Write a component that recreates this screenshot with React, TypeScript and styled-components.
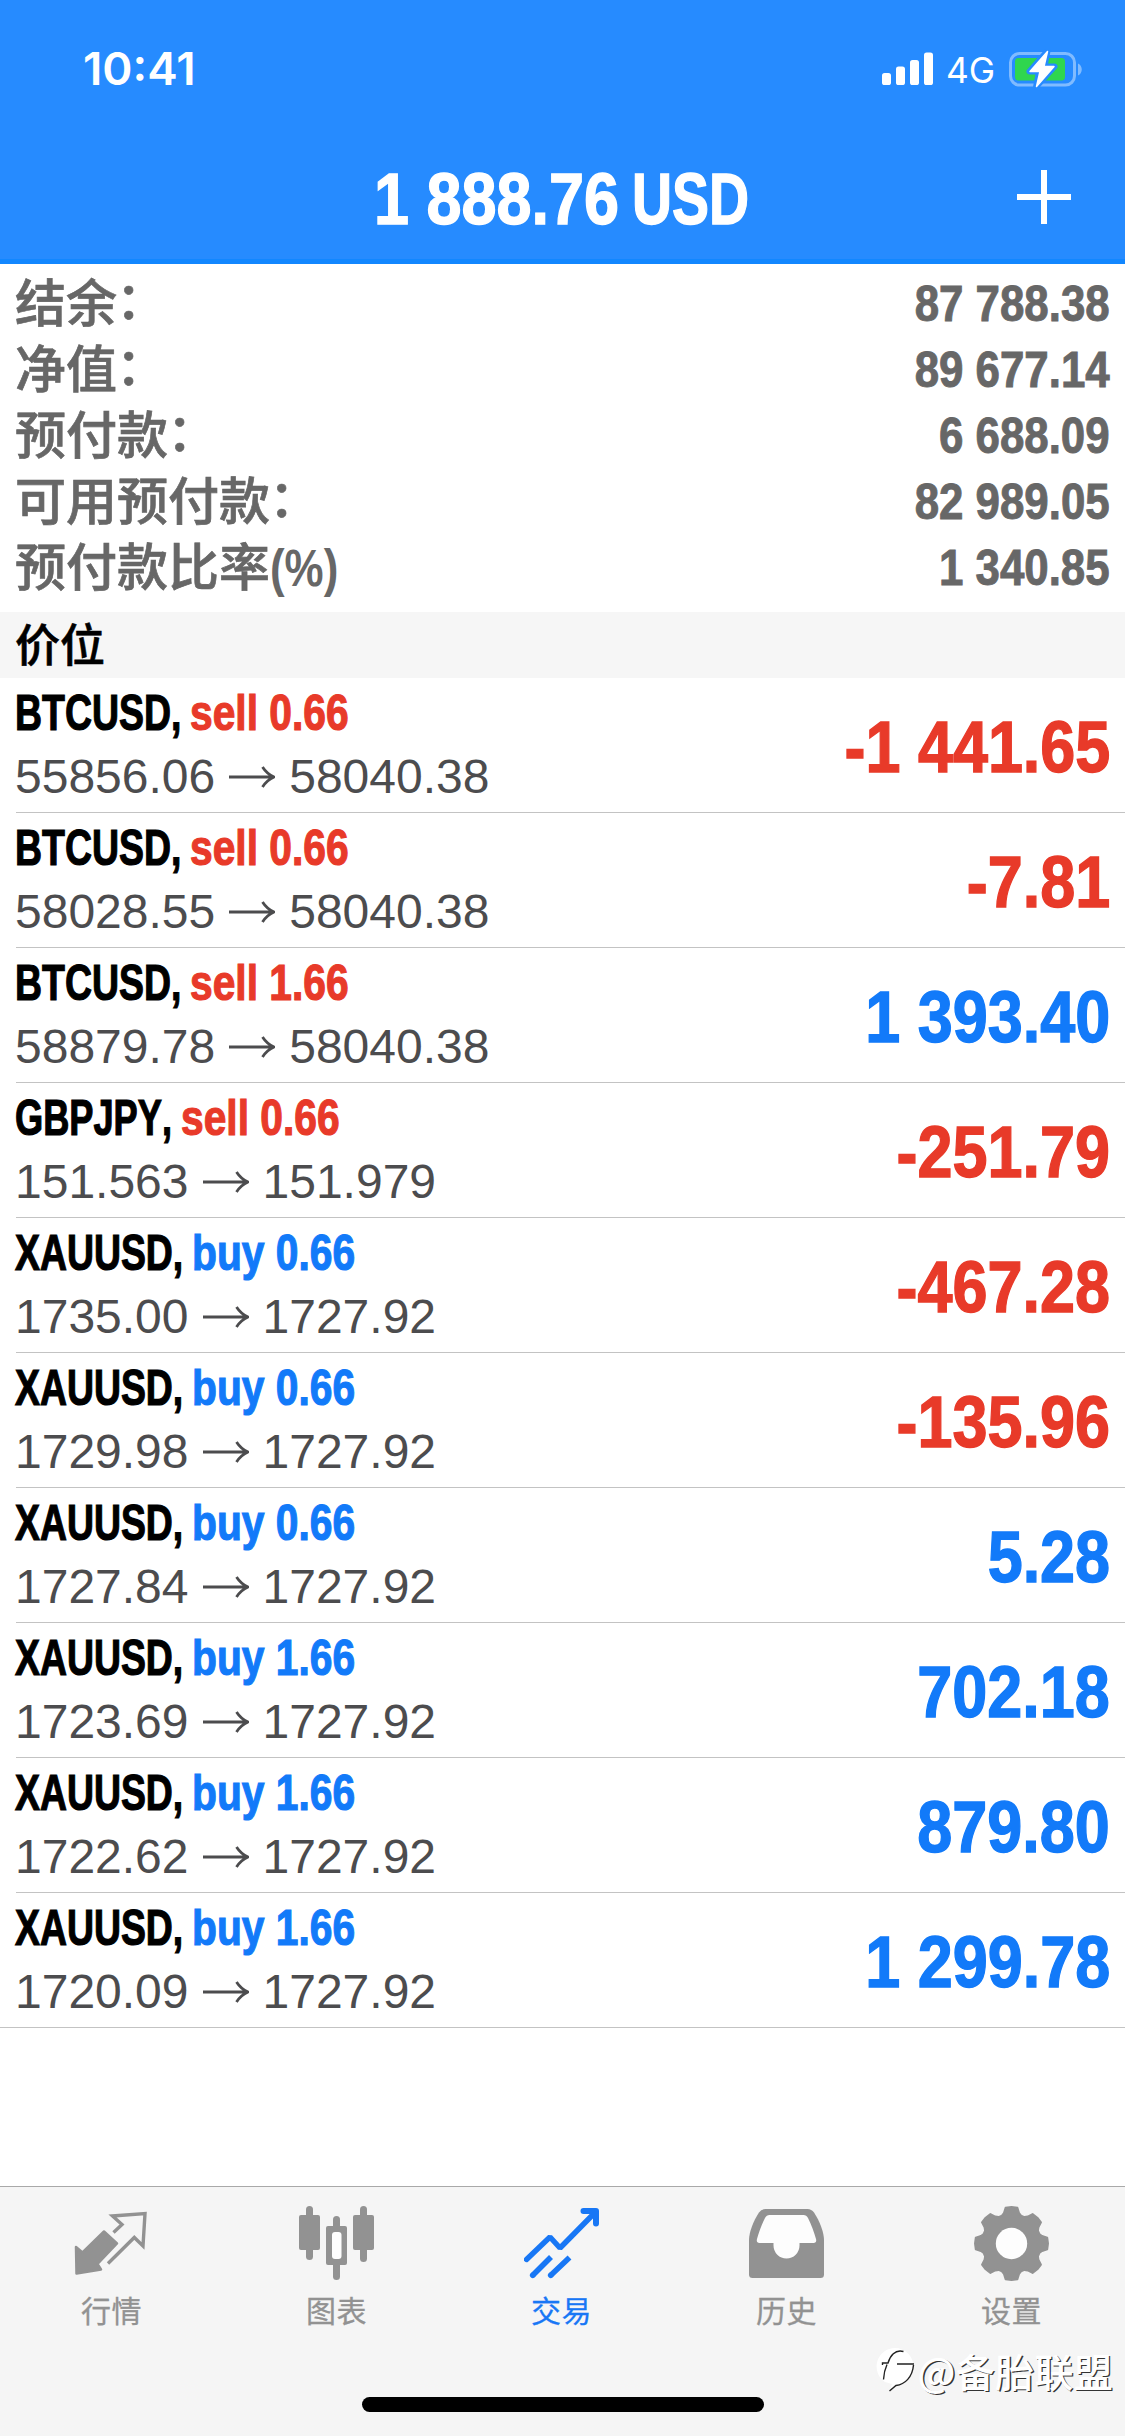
import React, { useLayoutEffect, useRef, useState } from "react";
import styled, { createGlobalStyle } from "styled-components";

const LATIN = '"Liberation Sans", Arial, sans-serif';
const CJK = '"Liberation Sans", "Noto Sans CJK SC", sans-serif';
const RED = "#e83a29";
const BLUE = "#127af9";

const GlobalStyle = createGlobalStyle`
  * { box-sizing: border-box; }
  body { margin: 0; background: #fff; }
`;

const Screen = styled.div`
  position: relative;
  display: flex;
  flex-direction: column;
  width: 1125px;
  height: 2436px;
  overflow: hidden;
  background: #fff;
  font-family: ${LATIN};
  font-kerning: none;
`;

/* Text squeezed horizontally to a given advance width. */
const FitBox = styled.span<{ $w: number }>`
  display: block;
  flex: none;
  width: ${(p) => p.$w}px;
  white-space: pre;
`;
const FitInner = styled.span`
  display: inline-block;
  transform-origin: 0 50%;
`;
function Fit({ width, children }: { width: number; children: React.ReactNode }) {
  const ref = useRef<HTMLSpanElement>(null);
  const [scale, setScale] = useState(1);
  useLayoutEffect(() => {
    const el = ref.current;
    if (el && el.offsetWidth) setScale(width / el.offsetWidth);
  }, [width, children]);
  return (
    <FitBox $w={width}>
      <FitInner ref={ref} style={{ transform: `scaleX(${scale})` }}>
        {children}
      </FitInner>
    </FitBox>
  );
}

const Header = styled.header`
  flex: none;
  height: 264px;
  background: #268bff;
  border-bottom: 5px solid #1287ff;
  color: #fff;
`;
const StatusBar = styled.div`
  display: flex;
  align-items: center;
  justify-content: space-between;
  height: 132px;
  padding: 6px 41px 0 83px;
`;
const Clock = styled.div`
  font: 600 45px/54px Inter, sans-serif;
`;
const StatusIcons = styled.div`
  display: flex;
  align-items: center;
`;
const Network = styled.div`
  margin: 0 14px 0 13px;
  padding-top: 1px;
  font: 400 36px/40px Inter, sans-serif;
`;
const NavBar = styled.div`
  display: grid;
  grid-template-columns: 1fr auto 1fr;
  align-items: center;
  height: 132px;
  padding: 2px 54px 0;
`;
const Title = styled.h1`
  grid-column: 2;
  display: flex;
  gap: 13px;
  margin: 0 2px 0 0;
  font-size: 73px;
  font-weight: 700;
  line-height: 80px;
  -webkit-text-stroke: 1.4px currentColor;
`;
const AddIcon = styled.svg`
  justify-self: end;
  margin-top: -4px;
`;

const Summary = styled.section`
  flex: none;
  height: 348px;
  padding: 7px 15px 0 15px;
  color: #676767;
`;
const SummaryRow = styled.div`
  display: flex;
  justify-content: space-between;
  height: 66px;
`;
const Label = styled.span`
  display: flex;
  padding-top: 1px;
  font: 500 51px/66px ${CJK};
  -webkit-text-stroke: 0.7px currentColor;
`;
const Colon = styled.span`
  margin: -3px 0 0 -1px;
`;
const Suffix = styled.span`
  font-weight: 700;
  -webkit-text-stroke: 0;
`;
const Amount = styled.span<{ $size: number; $color?: string }>`
  font-size: ${(p) => p.$size}px;
  font-weight: 700;
  line-height: 66px;
  color: ${(p) => p.$color ?? "inherit"};
  white-space: pre;
  transform: scaleX(0.868);
  transform-origin: 100% 50%;
  -webkit-text-stroke: ${(p) => p.$size * 0.019}px currentColor;
`;

const SectionTitle = styled.h2`
  flex: none;
  height: 66px;
  margin: 0;
  padding: 1px 15px 0;
  background: #f6f6f6;
  color: #000;
  font: 500 45px/67px ${CJK};
  -webkit-text-stroke: 0.6px currentColor;
`;

const List = styled.ul`
  flex: 1;
  margin: 0;
  padding: 0;
  list-style: none;
`;
const Item = styled.li`
  display: flex;
  justify-content: space-between;
  align-items: center;
  height: 135px;
  margin-left: 16px;
  padding-right: 15px;
  border-bottom: 1px solid #c3c3c3;
  &:last-child {
    margin-left: 0;
    padding-left: 16px;
  }
`;
const Profit = styled.div`
  display: flex;
  padding-top: 3px;
`;
const Details = styled.div`
  display: flex;
  flex-direction: column;
  margin-left: -1px;
`;
const Deal = styled.div<{ $buy: boolean }>`
  display: flex;
  gap: 9px;
  font-size: 50.5px;
  font-weight: 700;
  line-height: 64px;
  color: ${(p) => (p.$buy ? BLUE : RED)};
  -webkit-text-stroke: 1.2px currentColor;
`;
const Symbol = styled.div`
  color: #000;
`;
const Prices = styled.div`
  display: flex;
  align-items: center;
  gap: 14px;
  font-size: 48px;
  line-height: 64px;
  color: #4c4c4e;
`;

const TabBar = styled.nav`
  display: flex;
  flex: none;
  height: 250px;
  padding-top: 19px;
  border-top: 1px solid #a9a9a9;
  background: #f5f5f5;
`;
const Tab = styled.div<{ $active: boolean }>`
  display: flex;
  flex: 1;
  flex-direction: column;
  align-items: center;
  gap: 11px;
  padding-right: 2px;
  color: ${(p) => (p.$active ? "#1877f5" : "#929292")};
  font: 400 30px/40px ${CJK};
  letter-spacing: 0.5px;
  -webkit-text-stroke: 0.3px currentColor;
`;
const HomeIndicator = styled.div`
  position: absolute;
  left: 362px;
  bottom: 24px;
  width: 402px;
  height: 15px;
  border-radius: 8px;
  background: #000;
`;
const Watermark = styled.div`
  position: absolute;
  right: 12px;
  bottom: 36px;
  display: flex;
  align-items: center;
  gap: 2px;
  padding-bottom: 3px;
  color: #fff;
  font: 500 39px/54px "Noto Sans CJK SC", sans-serif;
  letter-spacing: 0.3px;
  text-shadow: 1.3px 1.3px 0 #333;
`;

const Signal = () => (
  <svg width="51" height="36" viewBox="0 0 51 36" fill="#fff">
    <rect x="0" y="22" width="9" height="12" rx="2.6" />
    <rect x="14" y="15.5" width="9" height="18.5" rx="2.6" />
    <rect x="28" y="9" width="9" height="25" rx="2.6" />
    <rect x="42" y="1.5" width="9" height="32.5" rx="2.6" />
  </svg>
);
const Battery = () => (
  <svg width="75" height="40" viewBox="0 0 75 40">
    <rect x="1.5" y="4.5" width="64" height="31.5" rx="9" fill="none" stroke="#80bbff" strokeWidth="3" />
    <path d="M69 14.5c5 2 5 10 0 12z" fill="#80bbff" />
    <rect x="6" y="9" width="50" height="22.5" rx="3.5" fill="#2fd64e" />
    <path
      d="M38.500 2 20.500 22.500h9.500l-3 15.500 18.500-20.500H35.500z"
      fill="#268bff"
      stroke="#268bff"
      strokeWidth="6"
      strokeLinejoin="round"
    />
    <path
      d="M38.500 2.500 21 22.500h10l-3.500 15 17.500-20H35z"
      fill="#fff"
      stroke="#fff"
      strokeWidth="1.500"
      strokeLinejoin="round"
    />
  </svg>
);
const Arrow = () => (
  <svg width="46" height="22" viewBox="0 0 46 22" fill="none" stroke="currentColor" strokeWidth="2.8">
    <path d="M0 11H44M33.500 1Q38 8 45 11Q38 14 33.500 21" />
  </svg>
);

const QuotesIcon = () => (
  <svg width="75" height="75" viewBox="0 0 75 75">
    <path
      d="M2 41 8.500 46.500 30 25.500 43 37.500 23.500 58 27 63.500 2.500 67.500z"
      fill="currentColor"
      stroke="currentColor"
      strokeWidth="2.500"
      strokeLinejoin="round"
    />
    <path
      d="M39.500 26.500 48 18.500 38.500 10 71 7.500 69 40 60.300 31.500 34 57.500"
      fill="none"
      stroke="currentColor"
      strokeWidth="3.400"
    />
  </svg>
);
const ChartIcon = () => (
  <svg width="75" height="75" viewBox="0 0 75 75" fill="currentColor">
    <rect x="7" y="0" width="7" height="54" rx="3.500" />
    <rect x="0" y="9" width="21" height="35" rx="2" />
    <rect x="34" y="10" width="7" height="64" rx="3.500" />
    <rect x="27" y="20" width="21" height="39" rx="2" />
    <rect x="33" y="26" width="9.500" height="27" rx="3" fill="#fdfdfd" />
    <rect x="61" y="0" width="7" height="56" rx="3.500" />
    <rect x="54" y="9" width="21" height="35" rx="2" />
  </svg>
);
const TradeIcon = () => (
  <svg width="75" height="75" viewBox="0 0 75 75" fill="none" stroke="currentColor" strokeLinecap="round">
    <path d="M2.500 53.500 26 31 36 42 71 6.500" strokeWidth="5.400" strokeLinejoin="bevel" />
    <path d="M59.500 5H72V17.500" strokeWidth="6" strokeLinejoin="round" />
    <path d="M8.500 69.500 27 51M26.500 69.500 45.500 51.500" strokeWidth="5.600" strokeLinecap="butt" />
    <path d="M8.700 69.300l.1-.1M26.700 69.300l.1-.1" strokeWidth="5.600" />
  </svg>
);
const HistoryIcon = () => (
  <svg width="75" height="75" viewBox="0 0 75 75">
    <path
      fill="currentColor"
      d="M10 6.500Q12.500 3 16.500 3H58.500Q62.500 3 65 6.500C71 15.500 75 27 75 34V68.500Q75 72 71.500 72H3.500Q0 72 0 68.500V34C0 27 4 15.500 10 6.500Z"
    />
    <path
      fill="#fdfdfd"
      d="M20.500 9H54.500Q57.500 9 59 12C62.500 19 65 26 67 33Q68 37 64.500 37H50.500V39.500A13 13 0 0 1 24.500 39.500V37H10.500Q7 37 8 33C10 26 12.500 19 16 12Q17.500 9 20.500 9Z"
    />
  </svg>
);
const gearPoints = Array.from({ length: 8 })
  .flatMap((_, i) =>
    [
      [-19, 29.5],
      [-14, 31.5],
      [-9.5, 36.3],
      [0, 36.6],
      [9.5, 36.3],
      [14, 31.5],
      [19, 29.5],
    ].map(([a, r]) => {
      const t = ((i * 45 + a) * Math.PI) / 180;
      return `${(37.5 + r * Math.sin(t)).toFixed(2)},${(37.5 - r * Math.cos(t)).toFixed(2)}`;
    }),
  )
  .join(" ");
const SettingsIcon = () => (
  <svg width="75" height="75" viewBox="0 0 75 75">
    <polygon points={gearPoints} fill="currentColor" stroke="currentColor" strokeWidth="1.800" strokeLinejoin="round" />
    <circle cx="37.500" cy="37.500" r="15.700" fill="#fdfdfd" />
  </svg>
);
const WatermarkLogo = () => (
  <svg width="40" height="46" viewBox="0 0 40 46">
    <path d="M19 1a18.500 18.500 0 0 0-10 34L16 37 14 43l5-4.500C30 38 37.500 30 37.500 19.500A18.500 18.500 0 0 0 19 1z" fill="#fff" />
    <path
      d="M27.500 4.500C19 2 14 9 12 16H6.500V18M11 17.500Q8 24 7.500 32.500M21 17H38M37.500 18C36.500 30 29 37.500 20 38.500L13.500 44"
      fill="none"
      stroke="#222"
      strokeWidth="1.400"
    />
  </svg>
);

const summary = [
  { label: "结余", value: "87 788.38" },
  { label: "净值", value: "89 677.14" },
  { label: "预付款", value: "6 688.09" },
  { label: "可用预付款", value: "82 989.05" },
  { label: "预付款比率", suffix: "(%)", value: "1 340.85" },
];

const symbolWidth: Record<string, number> = { BTCUSD: 166, GBPJPY: 157, XAUUSD: 168 };

const positions = [
  { symbol: "BTCUSD", side: "sell", volume: "0.66", open: "55856.06", now: "58040.38", profit: "-1 441.65" },
  { symbol: "BTCUSD", side: "sell", volume: "0.66", open: "58028.55", now: "58040.38", profit: "-7.81" },
  { symbol: "BTCUSD", side: "sell", volume: "1.66", open: "58879.78", now: "58040.38", profit: "1 393.40" },
  { symbol: "GBPJPY", side: "sell", volume: "0.66", open: "151.563", now: "151.979", profit: "-251.79" },
  { symbol: "XAUUSD", side: "buy", volume: "0.66", open: "1735.00", now: "1727.92", profit: "-467.28" },
  { symbol: "XAUUSD", side: "buy", volume: "0.66", open: "1729.98", now: "1727.92", profit: "-135.96" },
  { symbol: "XAUUSD", side: "buy", volume: "0.66", open: "1727.84", now: "1727.92", profit: "5.28" },
  { symbol: "XAUUSD", side: "buy", volume: "1.66", open: "1723.69", now: "1727.92", profit: "702.18" },
  { symbol: "XAUUSD", side: "buy", volume: "1.66", open: "1722.62", now: "1727.92", profit: "879.80" },
  { symbol: "XAUUSD", side: "buy", volume: "1.66", open: "1720.09", now: "1727.92", profit: "1 299.78" },
];

const tabs = [
  { name: "行情", Icon: QuotesIcon },
  { name: "图表", Icon: ChartIcon },
  { name: "交易", Icon: TradeIcon, active: true },
  { name: "历史", Icon: HistoryIcon },
  { name: "设置", Icon: SettingsIcon },
];

export default function App() {
  return (
    <>
      <GlobalStyle />
      <Screen>
        <Header>
          <StatusBar>
            <Clock>
              <Fit width={113}>10:41</Fit>
            </Clock>
            <StatusIcons>
              <Signal />
              <Network>
                <Fit width={49}>4G</Fit>
              </Network>
              <Battery />
            </StatusIcons>
          </StatusBar>
          <NavBar>
            <Title>
              <Fit width={245}>1 888.76</Fit>
              <Fit width={117}>USD</Fit>
            </Title>
            <AddIcon width="54" height="54" viewBox="0 0 54 54" stroke="#fff" strokeWidth="6">
              <path d="M0 27H54M27 0V54" />
            </AddIcon>
          </NavBar>
        </Header>

        <Summary>
          {summary.map((row) => (
            <SummaryRow key={row.label}>
              <Label>
                {row.label}
                {row.suffix ? (
                  <Suffix>
                    <Fit width={68}>{row.suffix}</Fit>
                  </Suffix>
                ) : (
                  <Colon>：</Colon>
                )}
              </Label>
              <Amount $size={50.5}>{row.value}</Amount>
            </SummaryRow>
          ))}
        </Summary>

        <SectionTitle>价位</SectionTitle>

        <List>
          {positions.map((p, i) => (
            <Item key={i}>
              <Details>
                <Deal $buy={p.side === "buy"}>
                  <Symbol>
                    <Fit width={symbolWidth[p.symbol]}>{p.symbol + ","}</Fit>
                  </Symbol>
                  <Fit width={p.side === "buy" ? 163 : 159}>{`${p.side} ${p.volume}`}</Fit>
                </Deal>
                <Prices>
                  {p.open}
                  <Arrow />
                  {p.now}
                </Prices>
              </Details>
              <Profit>
                <Amount $size={72.5} $color={p.profit.startsWith("-") ? RED : BLUE}>
                  {p.profit}
                </Amount>
              </Profit>
            </Item>
          ))}
        </List>

        <TabBar>
          {tabs.map(({ name, Icon, active }) => (
            <Tab key={name} $active={!!active}>
              <Icon />
              {name}
            </Tab>
          ))}
        </TabBar>
        <HomeIndicator />
        <Watermark>
          <WatermarkLogo />
          @备胎联盟
        </Watermark>
      </Screen>
    </>
  );
}
